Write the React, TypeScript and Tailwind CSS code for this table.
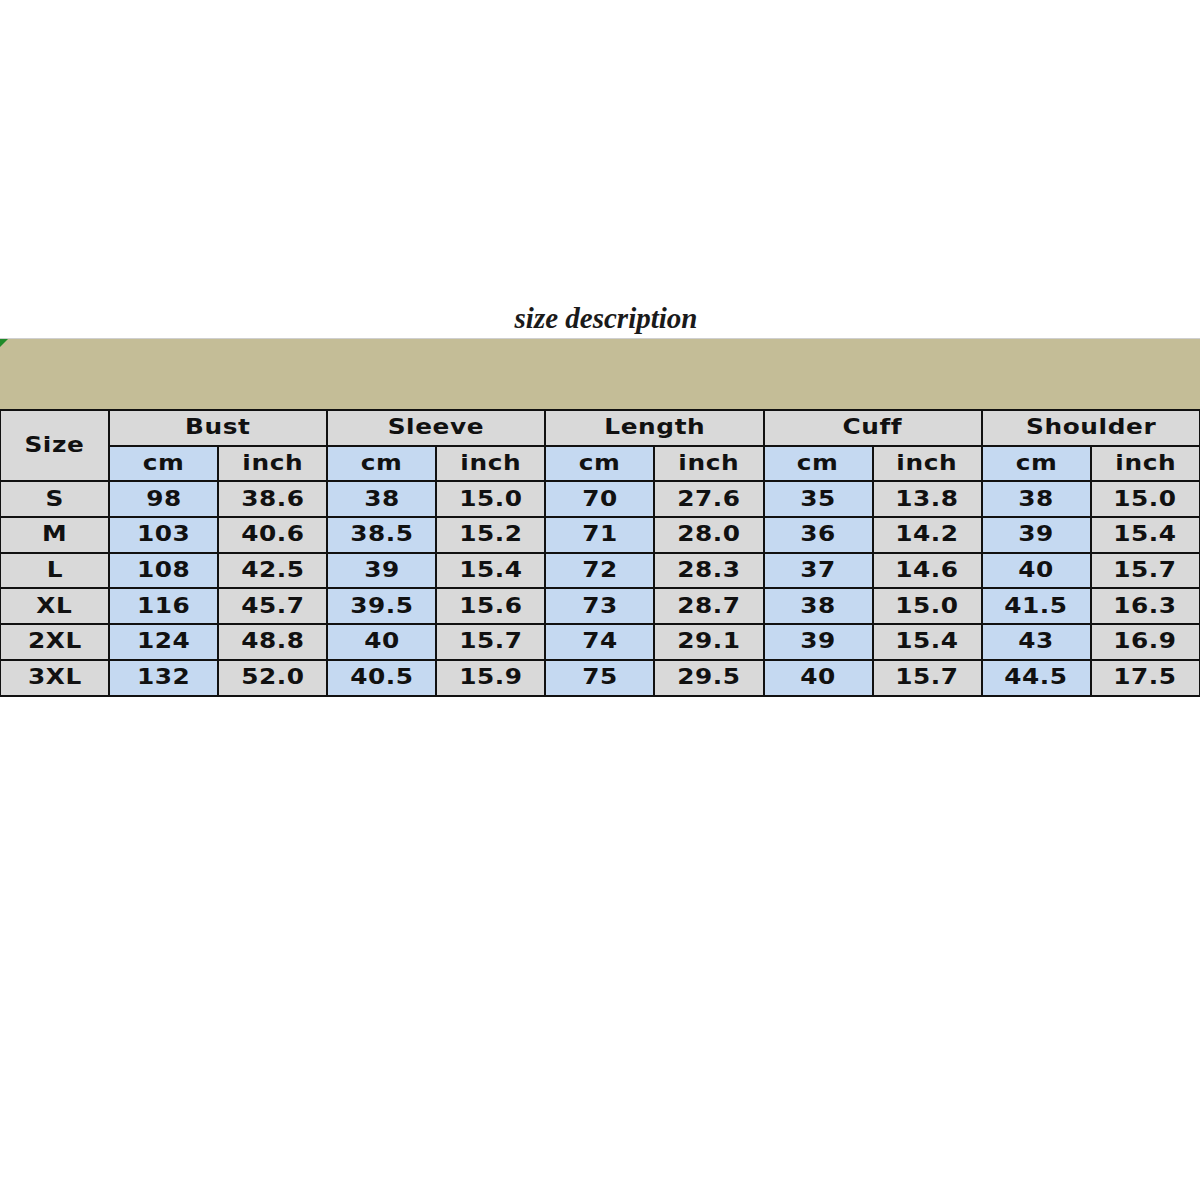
const groups = ['Bust', 'Sleeve', 'Length', 'Cuff', 'Shoulder']

const rows: [string, string[]][] = [
  ['S', ['98', '38.6', '38', '15.0', '70', '27.6', '35', '13.8', '38', '15.0']],
  ['M', ['103', '40.6', '38.5', '15.2', '71', '28.0', '36', '14.2', '39', '15.4']],
  ['L', ['108', '42.5', '39', '15.4', '72', '28.3', '37', '14.6', '40', '15.7']],
  ['XL', ['116', '45.7', '39.5', '15.6', '73', '28.7', '38', '15.0', '41.5', '16.3']],
  ['2XL', ['124', '48.8', '40', '15.7', '74', '29.1', '39', '15.4', '43', '16.9']],
  ['3XL', ['132', '52.0', '40.5', '15.9', '75', '29.5', '40', '15.7', '44.5', '17.5']],
]

const cell = 'border-2 border-[#111] text-center align-middle h-[35.7px] p-0'

function Txt({ children }: { children: string }) {
  return <span className="inline-block scale-x-[1.18]">{children}</span>
}

export default function App() {
  return (
    <div className="w-[1200px] h-[1200px] bg-white overflow-hidden">
      <div className="h-[338px] flex items-end justify-center">
        <h1 className="font-['Liberation_Serif',serif] italic font-bold text-[29px] text-[#1a1a1a] pl-[12px] leading-none pb-[5px]">
          size description
        </h1>
      </div>
      <div className="relative h-[71px] bg-[#c4bd97] border-t border-[#cfcfcf]">
        <div className="absolute left-0 top-0 w-0 h-0 border-t-[8px] border-r-[8px] border-t-[#1f8a2a] border-r-transparent" />
      </div>
      <table className="w-[1202px] -ml-[1px] table-fixed border-collapse font-['DejaVu_Sans',sans-serif] font-bold text-[21px] tracking-[0.5px] text-[#111] leading-none">
        <tbody>
          <tr>
            <td rowSpan={2} className={`${cell} bg-[#d9d9d9]`}><Txt>Size</Txt></td>
            {groups.map((g) => (
              <td key={g} colSpan={2} className={`${cell} bg-[#d9d9d9]`}><Txt>{g}</Txt></td>
            ))}
          </tr>
          <tr>
            {groups.map((g) => [
              <td key={g + 'cm'} className={`${cell} bg-[#c5d9f1]`}><Txt>cm</Txt></td>,
              <td key={g + 'in'} className={`${cell} bg-[#d9d9d9]`}><Txt>inch</Txt></td>,
            ])}
          </tr>
          {rows.map(([size, vals]) => (
            <tr key={size}>
              <td className={`${cell} bg-[#d9d9d9]`}><Txt>{size}</Txt></td>
              {vals.map((v, i) => (
                <td key={i} className={`${cell} ${i % 2 === 0 ? 'bg-[#c5d9f1]' : 'bg-[#d9d9d9]'}`}><Txt>{v}</Txt></td>
              ))}
            </tr>
          ))}
        </tbody>
      </table>
    </div>
  )
}
